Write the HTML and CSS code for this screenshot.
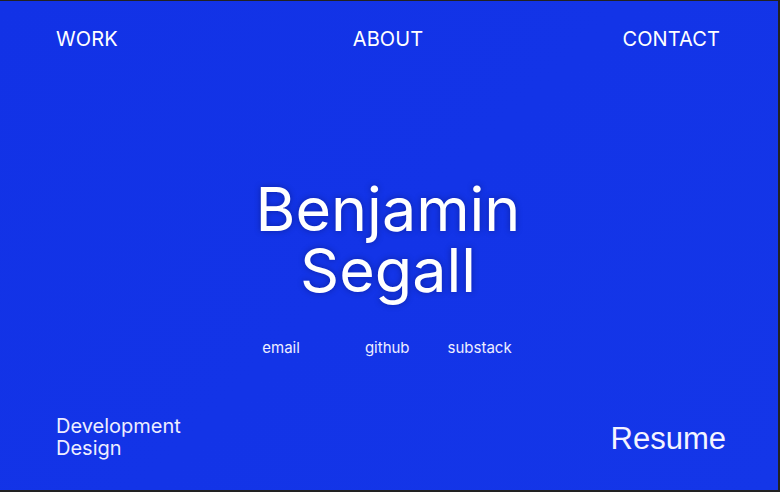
FILE: index.html
```html
<!DOCTYPE html>
<html>
<head>
<meta charset="utf-8">
<link rel="stylesheet" href="styles.css">
</head>
<body>
<div class="frame">
  <nav class="nav">
    <a class="nav-item nav-left">WORK</a>
    <a class="nav-item nav-mid">ABOUT</a>
    <a class="nav-item nav-right">CONTACT</a>
  </nav>
  <main class="hero">
    <h1 class="name">Benjamin<br>Segall</h1>
    <div class="links">
      <a class="link link-email">email</a>
      <a class="link link-github">github</a>
      <a class="link link-substack">substack</a>
    </div>
  </main>
  <footer class="foot">
    <div class="roles">Development<br>Design</div>
    <a class="resume">Resume</a>
  </footer>
</div>
</body>
</html>
```

FILE: styles.css
```css
* { box-sizing: border-box; margin: 0; padding: 0; }
html, body { width: 780px; height: 492px; overflow: hidden; }
body {
  background: #222;
  font-family: Inter, "Noto Sans", sans-serif;
  color: #fff;
}
.frame {
  width: 778px;
  height: 489px;
  margin-top: 1px;
  background: linear-gradient(135deg, #1232e6 0%, #1436e8 100%);
  display: flex;
  flex-direction: column;
  padding: 0 58px 0 56px;
}
.nav {
  display: grid;
  grid-template-columns: 1fr auto 1fr;
  align-items: center;
  height: 75px;
  padding-top: 1px;
}
.nav-item {
  font-size: 20px;
  letter-spacing: 0.1px;
  color: #fff;
}
.nav-mid { text-align: center; }
.nav-right { justify-self: end; }
.hero {
  flex: 1;
  display: flex;
  flex-direction: column;
  align-items: center;
  padding-top: 103px;
}
.name {
  font-weight: 400;
  font-size: 61px;
  line-height: 61px;
  text-align: center;
  letter-spacing: 0;
  text-shadow: 0 0 6px rgba(0, 0, 40, 0.35);
}
.links {
  display: flex;
  margin-top: 37px;
  font-size: 15px;
  padding-right: 2px;
}
.link { color: #eef; }
.link-github { margin-left: 65px; }
.link-substack { margin-left: 38px; }
.foot {
  display: flex;
  justify-content: space-between;
  align-items: flex-end;
  padding-bottom: 31px;
}
.roles {
  font-size: 20px;
  line-height: 22px;
  letter-spacing: 0;
  color: #eef;
}
.resume {
  font-family: "Liberation Sans", Arial, sans-serif;
  font-size: 31px;
  color: #f4f4ff;
  margin-bottom: 2px;
  margin-right: -6px;
}
```
